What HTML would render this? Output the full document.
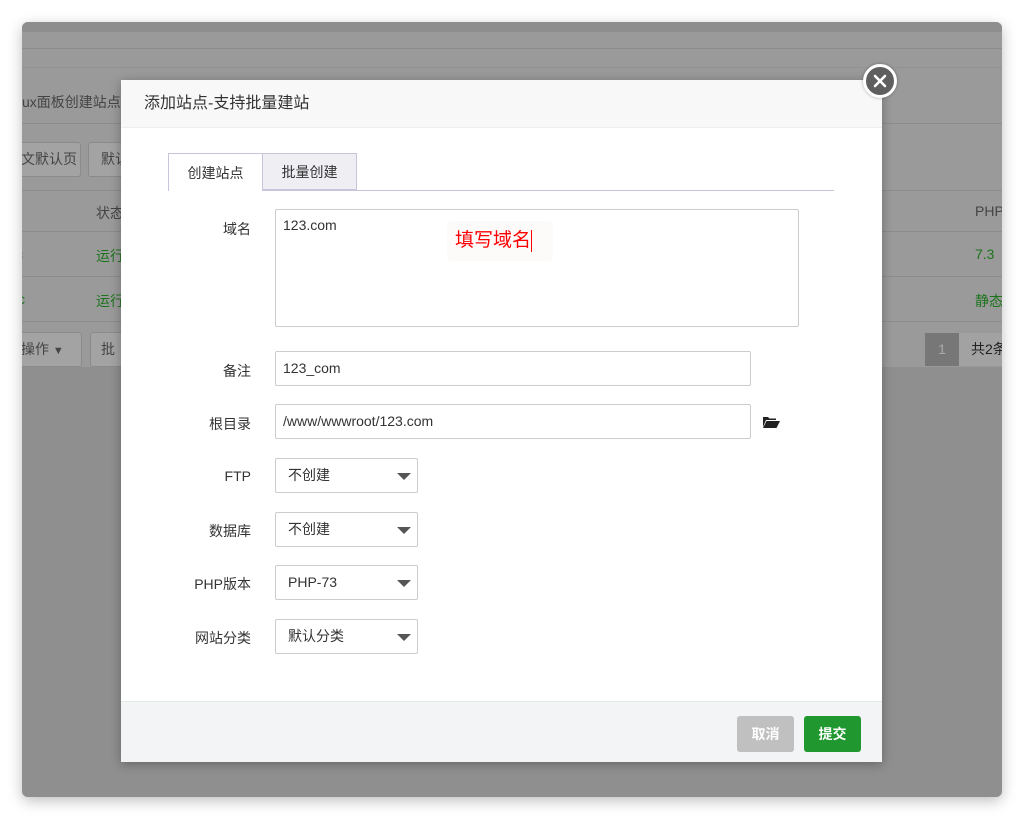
<!DOCTYPE html>
<html><head><meta charset="utf-8"><style>
*{margin:0;padding:0;box-sizing:border-box}
body{width:1024px;height:819px;background:#fff;position:relative;overflow:hidden;font-family:"Liberation Sans","Noto Sans CJK SC",sans-serif;font-size:14px;color:#333}
.win{position:absolute;left:22px;top:22px;width:980px;height:775px;border-radius:6px;background:#9a9a9a;overflow:hidden;box-shadow:0 4px 14px rgba(0,0,0,.25)}
.a{position:absolute;white-space:nowrap}
.ln{position:absolute;left:0;right:0;height:1px;background:#8c8c8c}
.g{color:#1c731c}
.bx{position:absolute;border:1px solid #8a8a8a;border-radius:3px;background:#a3a3a3;color:#444;white-space:nowrap}
.dlg{position:absolute;left:121px;top:80px;width:761px;height:682px;background:#fff;box-shadow:0 2px 10px rgba(0,0,0,.3)}
.hd{height:48px;background:#f8f8f8;border-bottom:1px solid #eee;padding-left:23px;line-height:48px;font-size:16px;color:#333}
.ft{position:absolute;left:0;right:0;bottom:0;height:61px;background:#f2f4f5;border-top:1px solid #e5e8e8}
.btn{position:absolute;top:14px;height:36px;width:57px;border-radius:3px;color:#fff;font-weight:bold;text-align:center;line-height:36px;font-size:14px}
.lab{position:absolute;width:130px;text-align:right;font-size:14px;color:#333}
.inp{position:absolute;left:154px;border:1px solid #ccc;border-radius:2px;background:#fff;padding-left:7px;font-size:14px;color:#333}
.sel{position:absolute;left:154px;width:143px;height:35px;border:1px solid #ccc;border-radius:2px;padding-left:12px;line-height:33px}
.sel:after{content:"";position:absolute;right:6px;top:14px;border-left:7px solid transparent;border-right:7px solid transparent;border-top:7px solid #555}
</style></head><body>
<div class="win">
 <div class="a" style="left:0;top:0;right:0;height:10px;background:#8e8e8e"></div>
 <div class="ln" style="top:26px"></div>
 <div class="ln" style="top:45px;background:#929292"></div>
 <div class="ln" style="top:101px"></div>
 <div class="ln" style="top:168px"></div>
 <div class="ln" style="top:209px"></div>
 <div class="ln" style="top:254px"></div>
 <div class="ln" style="top:299px"></div>
 <div class="a" style="left:0;right:0;top:345px;bottom:0;background:#8f8f8f"></div>
 <div class="a" style="left:0;top:70px;color:#444;font-size:14px">ux面板创建站点B</div>
 <div class="bx" style="left:-8px;top:120px;width:67px;height:35px;line-height:33px;padding-left:6px">文默认页</div>
 <div class="bx" style="left:66px;top:120px;width:60px;height:35px;line-height:33px;padding-left:12px">默认</div>
 <div class="a" style="left:74px;top:181px;color:#444">状态</div>
 <div class="a g" style="left:74px;top:224px">运行</div>
 <div class="a g" style="left:74px;top:269px">运行</div>
 <div class="a g" style="left:-6px;top:224px">c</div>
 <div class="a g" style="left:-4px;top:269px">c</div>
 <div class="bx" style="left:-8px;top:310px;width:68px;height:35px;line-height:33px;padding-left:6px">操作 <span style="font-size:11px">▼</span></div>
 <div class="bx" style="left:68px;top:310px;width:60px;height:35px;line-height:33px;padding-left:10px">批</div>
 <div class="a" style="left:953px;top:181px;color:#444">PHP</div>
 <div class="a g" style="left:953px;top:224px">7.3</div>
 <div class="a g" style="left:953px;top:269px">静态</div>
 <div class="a" style="left:903px;top:311px;width:34px;height:33px;background:#777;color:#aaa;text-align:center;line-height:33px">1</div>
 <div class="a" style="left:937px;top:311px;width:60px;height:33px;background:#a2a2a2;line-height:33px;padding-left:12px;color:#222">共2条</div>
</div>
<div class="dlg">
 <div class="hd">添加站点-支持批量建站</div>
 <div class="a" style="left:47px;top:110px;width:666px;height:1px;background:#c8c4dc"></div>
 <div class="a" style="left:47px;top:73px;width:95px;height:38px;background:#fff;border:1px solid #c8c4dc;border-bottom:none;text-align:center;line-height:38px;font-size:14px">创建站点</div>
 <div class="a" style="left:142px;top:73px;width:94px;height:37px;background:#eeeef3;border:1px solid #c8c4dc;border-left:none;text-align:center;line-height:37px;font-size:14px">批量创建</div>
 <div class="lab" style="left:0;top:139px">域名</div>
 <div class="inp" style="top:129px;width:524px;height:118px;padding-top:7px">123.com</div>
 <div class="a" style="left:326px;top:141px;width:106px;height:40px;background:#fdfafa;border-radius:4px;color:#f00;font-size:19px;line-height:40px;padding-left:8px">填写域名<span style="display:inline-block;width:1px;height:22px;background:#f00;vertical-align:middle"></span></div>
 <div class="lab" style="left:0;top:281px">备注</div>
 <div class="inp" style="top:271px;width:476px;height:35px;line-height:33px">123_com</div>
 <div class="lab" style="left:0;top:334px">根目录</div>
 <div class="inp" style="top:324px;width:476px;height:35px;line-height:33px">/www/wwwroot/123.com</div>
 <svg class="a" style="left:641px;top:336px" width="18" height="13" viewBox="0 0 18 13"><path d="M1 1h5l1.5 1.5H14V4H4L1 11z" fill="#222"/><path d="M4.5 5H18L14.5 12H1z" fill="#222"/></svg>
 <div class="lab" style="left:0;top:388px">FTP</div>
 <div class="sel" style="top:378px">不创建</div>
 <div class="lab" style="left:0;top:441px">数据库</div>
 <div class="sel" style="top:432px">不创建</div>
 <div class="lab" style="left:0;top:494px">PHP版本</div>
 <div class="sel" style="top:485px">PHP-73</div>
 <div class="lab" style="left:0;top:548px">网站分类</div>
 <div class="sel" style="top:539px">默认分类</div>
 <div class="ft">
  <div class="btn" style="left:616px;background:#c0c0c0">取消</div>
  <div class="btn" style="left:683px;background:#20982f">提交</div>
 </div>
</div>
<div class="a" style="left:863px;top:64px;width:34px;height:34px;border-radius:50%;background:#5f5f5f;border:3px solid #fff;box-shadow:0 0 3px rgba(0,0,0,.3)">
 <svg width="28" height="28" viewBox="0 0 28 28" style="position:absolute;left:0;top:0"><path d="M9 9L19 19M19 9L9 19" stroke="#fff" stroke-width="2.6" stroke-linecap="round"/></svg>
</div>
</body></html>
